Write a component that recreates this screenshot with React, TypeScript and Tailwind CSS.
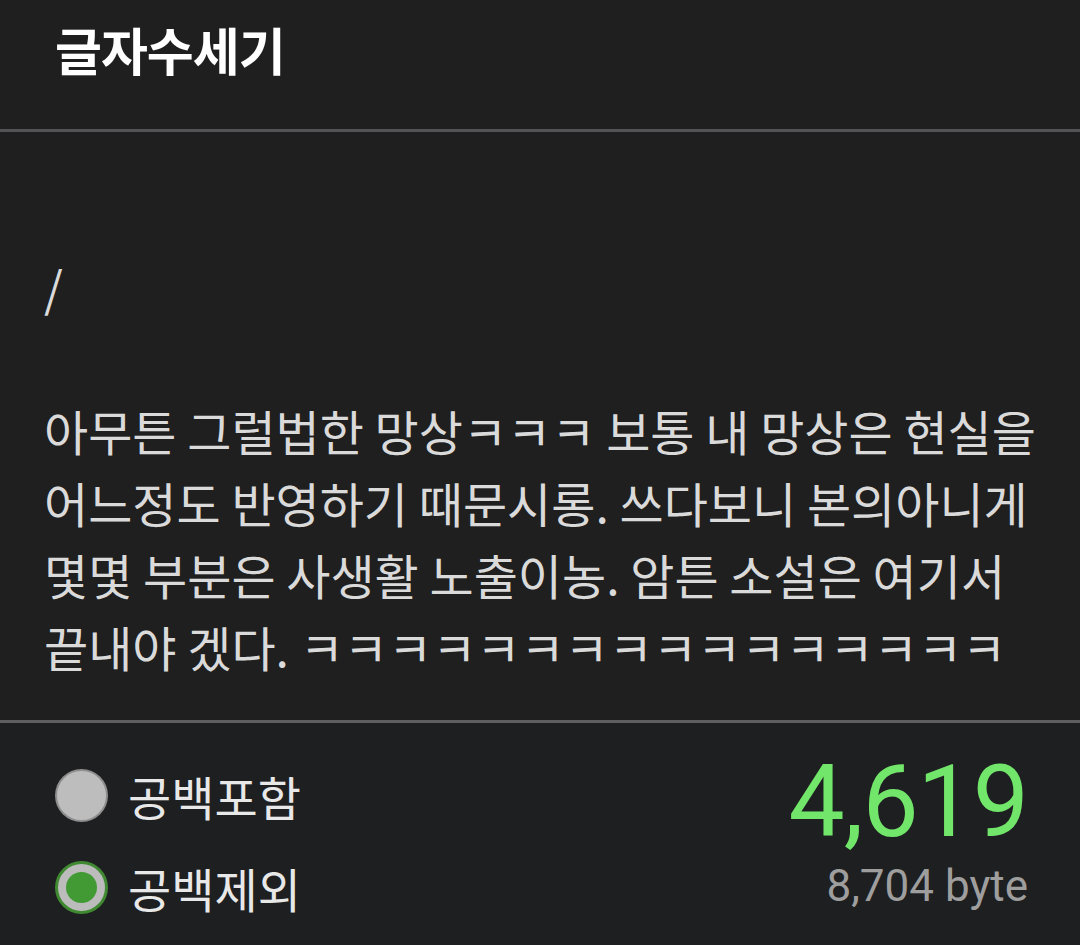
const lines = [
  '아무튼 그럴법한 망상ㅋㅋㅋ 보통 내 망상은 현실을',
  '어느정도 반영하기 때문시롱. 쓰다보니 본의아니게',
  '몇몇 부분은 사생활 노출이농. 암튼 소설은 여기서',
  '끝내야 겠다. ㅋㅋㅋㅋㅋㅋㅋㅋㅋㅋㅋㅋㅋㅋㅋㅋ',
]

function Radio({ checked }: { checked?: boolean }) {
  if (checked) {
    return (
      <div className="w-[53px] h-[53px] rounded-full bg-[#3f8a31] flex items-center justify-center">
        <div className="w-[47px] h-[47px] rounded-full bg-[#bcbcbc] flex items-center justify-center">
          <div className="w-[31px] h-[31px] rounded-full bg-[#419a34]" />
        </div>
      </div>
    )
  }
  return (
    <div className="w-[53px] h-[53px] rounded-full bg-[#8e8e8e] flex items-center justify-center">
      <div className="w-[49px] h-[49px] rounded-full bg-[#bdbdbd]" />
    </div>
  )
}

export default function App() {
  const kr = { fontFamily: '"Noto Sans CJK KR", "Noto Sans", sans-serif' }
  const num = { fontFamily: 'Roboto, "Noto Sans", sans-serif' }

  return (
    <div className="w-[1080px] h-[945px] flex flex-col bg-[#1f1f1f] overflow-hidden" style={kr}>
      {/* header */}
      <div className="h-[129px] flex items-center pl-[55px] pb-[30px]">
        <h1 className="text-[51px] font-bold text-white tracking-[-1px] leading-none">글자수세기</h1>
      </div>
      <div className="h-[3px] bg-[#535356]" />

      {/* text */}
      <div className="h-[588px] pl-[44px] pt-[118px] text-[48px] leading-[72px] text-[#dadada]">
        <div>/</div>
        <div>&nbsp;</div>
        {lines.map((l, i) => (
          <div key={i} className="whitespace-nowrap">{l}</div>
        ))}
      </div>
      <div className="h-[3px] bg-[#5e5e60]" />

      {/* bottom */}
      <div className="flex-1 bg-[#1e1f21] flex justify-between pl-[55px] pr-[52px] pt-[26px]">
        <div className="flex flex-col">
          <div className="h-[92px] flex items-center gap-[20px]">
            <Radio />
            <span className="text-[47px] text-[#e8e8e8] leading-none">공백포함</span>
          </div>
          <div className="h-[92px] flex items-center gap-[20px]">
            <Radio checked />
            <span className="text-[47px] text-[#e8e8e8] leading-none">공백제외</span>
          </div>
        </div>
        <div className="flex flex-col items-end" style={num}>
          <div className="text-[100px] leading-none text-[#72e66a] tracking-[-1px] mt-[3px]">4,619</div>
          <div className="text-[44px] leading-none text-[#9e9e9e] mt-[12px]">8,704 byte</div>
        </div>
      </div>
    </div>
  )
}
